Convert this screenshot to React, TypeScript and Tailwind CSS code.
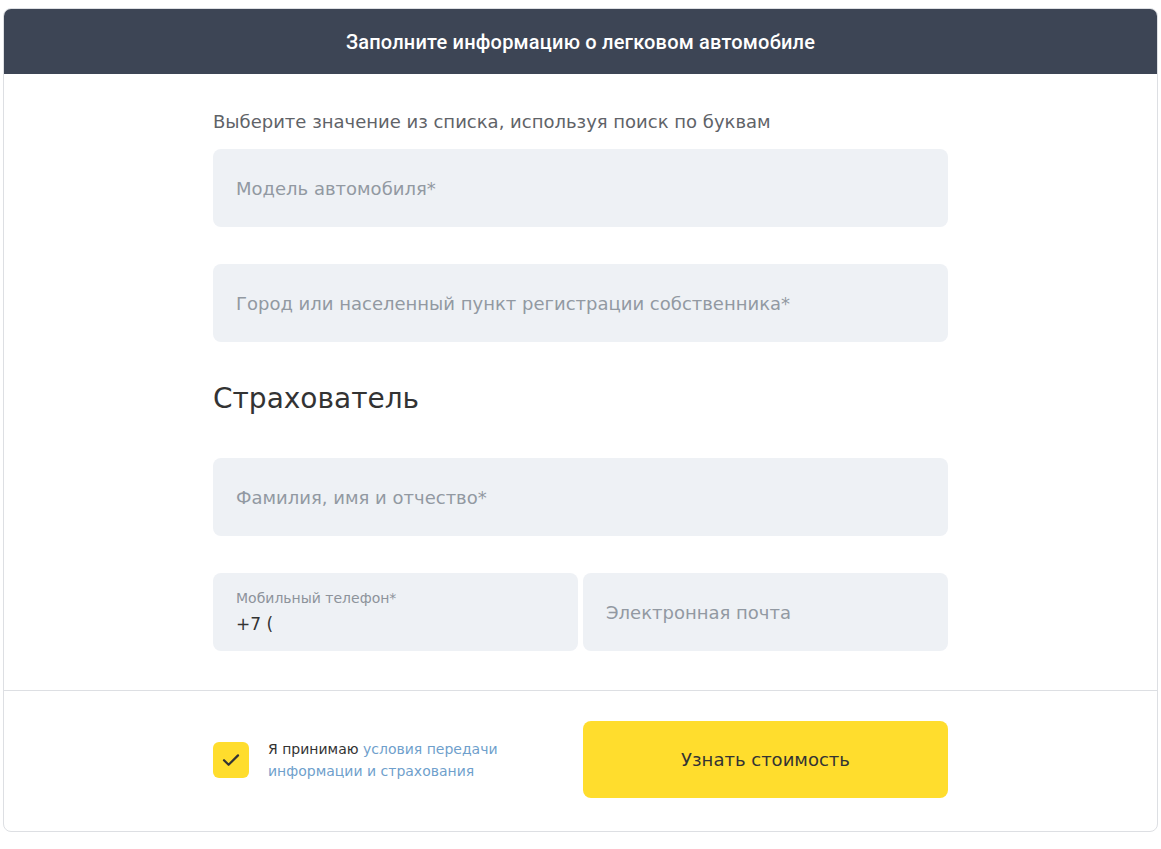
import React from 'react';

const font = { fontFamily: '"DejaVu Sans", "Liberation Sans", sans-serif' };

const Field = ({ placeholder }: { placeholder: string }) => (
  <div className="h-[78px] rounded-lg bg-[#eef1f5] px-[23px] flex items-center text-[18px] text-[#9299a2]">
    {placeholder}
  </div>
);

export default function App() {
  return (
    <div className="bg-white min-h-[849px] pt-[8px] px-[3px]" style={font}>
      <div className="w-[1155px] rounded-lg border border-[#dddfe3] overflow-hidden">
        <div
          className="h-[65px] bg-[#3d4555] flex items-center justify-center text-white text-[20px] font-medium tracking-[0.2px]"
          style={{ fontFamily: 'Roboto, sans-serif' }}
        >
          Заполните информацию о легковом автомобиле
        </div>

        <div className="w-[735px] ml-[209px] pt-[36px] pb-[39px]">
          <p className="text-[18px] leading-6 text-[#5f6368] mb-[15px]">
            Выберите значение из списка, используя поиск по буквам
          </p>
          <div className="flex flex-col gap-[37px]">
            <Field placeholder="Модель автомобиля*" />
            <Field placeholder="Город или населенный пункт регистрации собственника*" />
          </div>

          <h2 className="text-[28px] leading-9 text-[#333333] mt-[39px] mb-[41px]">Страхователь</h2>

          <div className="flex flex-col gap-[37px]">
            <Field placeholder="Фамилия, имя и отчество*" />
            <div className="grid grid-cols-2 gap-[5px]">
              <div className="h-[78px] rounded-lg bg-[#eef1f5] px-[23px] flex flex-col justify-center pt-[2px]">
                <span className="text-[14px] leading-4 text-[#8d939b]">Мобильный телефон*</span>
                <span className="text-[17px] leading-6 text-[#333333] mt-[6px]">+7 (</span>
              </div>
              <Field placeholder="Электронная почта" />
            </div>
          </div>
        </div>

        <div className="border-t border-[#dddfe3] pt-[30px] pb-[33px]">
          <div className="w-[735px] ml-[209px] grid grid-cols-2 gap-[5px]">
            <div className="flex items-center gap-[19px]">
              <div className="w-9 h-9 shrink-0 rounded-md bg-[#ffdd2d] flex items-center justify-center">
                <svg width="18" height="14" viewBox="0 0 18 14" fill="none">
                  <path d="M2 7.2l4.6 4.6L16 2.4" stroke="#333" strokeWidth="2.2" strokeLinecap="round" strokeLinejoin="round" />
                </svg>
              </div>
              <p className="text-[14px] leading-[22px] text-[#333333] w-[250px]">
                Я принимаю <span className="text-[#6f9fcc]">условия передачи информации и страхования</span>
              </p>
            </div>
            <button className="h-[77px] rounded-lg bg-[#ffdd2d] text-[18px] text-[#333333]">
              Узнать стоимость
            </button>
          </div>
        </div>
      </div>
    </div>
  );
}
